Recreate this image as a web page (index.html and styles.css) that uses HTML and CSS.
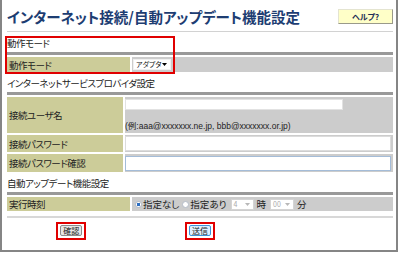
FILE: index.html
```html
<!DOCTYPE html>
<html lang="ja">
<head>
<meta charset="utf-8">
<title>インターネット接続/自動アップデート機能設定</title>
<link rel="stylesheet" href="styles.css">
</head>
<body>
<div class="frame">
  <header class="head">
    <h1 class="title">インターネット接続/自動アップデート機能設定</h1>
    <button class="help" type="button">ヘルプ?</button>
  </header>
  <div class="rule"></div>

  <section class="sec">
    <div class="sec-title">動作モード</div>
    <div class="grid grid-wide grid-mode">
      <div class="bar"></div>
      <div class="lab">動作モード</div>
      <div class="val val-pad">
        <span class="sel sel-mode">アダプタ<svg class="arr" width="5" height="3" viewBox="0 0 5 3"><path d="M0 0H5L2.5 3Z" fill="#000"/></svg></span>
      </div>
    </div>
  </section>

  <section class="sec">
    <div class="sec-title">インターネットサービスプロバイダ設定</div>
    <div class="grid grid-narrow grid-isp">
      <div class="bar"></div>
      <div class="lab">接続ユーザ名</div>
      <div class="val val-user">
        <input class="inp inp-user" type="text">
        <span class="example">(例:aaa@xxxxxxx.ne.jp, bbb@xxxxxxx.or.jp)</span>
      </div>
      <div class="lab">接続パスワード</div>
      <div class="val val-inp"><input class="inp inp-full" type="password"></div>
      <div class="lab">接続パスワード確認</div>
      <div class="val val-inp"><input class="inp inp-full inp-focus" type="password"></div>
    </div>
  </section>

  <section class="sec">
    <div class="sec-title">自動アップデート機能設定</div>
    <div class="grid grid-wide grid-time">
      <div class="bar"></div>
      <div class="lab">実行時刻</div>
      <div class="val val-time">
        <span class="radio radio-on"></span><span class="opt">指定なし</span>
        <span class="radio"></span><span class="opt">指定あり</span>
        <span class="sel sel-off sel-hour">4<svg class="arr" width="5" height="3" viewBox="0 0 5 3"><path d="M0 0H5L2.5 3Z" fill="#b8b8b8"/></svg></span>
        <span class="unit">時</span>
        <span class="sel sel-off sel-min">00<svg class="arr" width="5" height="3" viewBox="0 0 5 3"><path d="M0 0H5L2.5 3Z" fill="#b8b8b8"/></svg></span>
        <span class="unit">分</span>
      </div>
    </div>
  </section>

  <div class="rule rule-bottom"></div>

  <div class="actions">
    <div class="act-cell"><span class="mark"><button class="btn" type="button">確認</button></span></div>
    <div class="act-cell"><span class="mark"><button class="btn btn-primary" type="button">送信</button></span></div>
    <div class="act-cell"></div>
  </div>

  <div class="mark-box"></div>
</div>
</body>
</html>
```

FILE: styles.css
```css
html, body {
  margin: 0;
  padding: 0;
  background: #fff;
}

body {
  font-family: "Noto Sans CJK JP", "Noto Sans", sans-serif;
  font-feature-settings: "palt";
  color: #222;
}

.frame {
  position: relative;
  box-sizing: border-box;
  width: 398px;
  height: 252px;
  border: 2px solid #858585;
  border-top: none;
  padding: 0 3px 0 5px;
}

/* header */
.head {
  height: 31px;
  box-sizing: border-box;
  padding-top: 8px;
  display: flex;
  justify-content: space-between;
  align-items: flex-start;
}

.title {
  margin: 0;
  font-size: 14.5px;
  line-height: 17px;
  font-weight: 700;
  color: #1d3d72;
  white-space: nowrap;
}

.help {
  margin-top: 1px;
  width: 55px;
  height: 15px;
  padding: 0;
  box-sizing: border-box;
  background: #ffffc8;
  border: 1px solid;
  border-color: #e4e4d0 #9a9a8a #9a9a8a #e4e4d0;
  font-family: inherit;
  font-size: 8px;
  line-height: 13px;
  font-weight: 700;
  color: #1d2d55;
  font-feature-settings: "palt";
}

.rule {
  height: 1px;
  background: #d2d2d2;
}

.rule-bottom {
  height: 2px;
  margin-top: 5px;
  background: #d8d8d8;
}

/* sections */
.sec-title {
  box-sizing: border-box;
  height: 20px;
  padding-top: 4px;
  font-size: 9.5px;
  letter-spacing: -0.5px;
  line-height: 14px;
  color: #222;
  white-space: nowrap;
}

.grid {
  display: grid;
  gap: 2px;
}

.grid-wide {
  grid-template-columns: 123px 1fr;
}

.grid-narrow {
  grid-template-columns: 116px 1fr;
}

.grid-mode {
  grid-template-rows: 3px 15px;
}

.grid-isp {
  grid-template-rows: 3px 36px 17px 18px;
}

.grid-time {
  grid-template-rows: 3px 14px;
}

.bar {
  grid-column: 1 / -1;
  background: #999;
}

.lab {
  background: #cccc99;
  padding-left: 2px;
  font-size: 9.5px;
  letter-spacing: -0.5px;
  line-height: 12px;
  display: flex;
  align-items: center;
  white-space: nowrap;
  color: #222;
}

.val {
  background: #cccccc;
  display: flex;
  align-items: center;
  min-width: 0;
}

.val-pad {
  padding-left: 1px;
}

/* fake selects */
.sel {
  box-sizing: border-box;
  display: inline-flex;
  align-items: center;
  justify-content: space-between;
  height: 11px;
  background: #fff;
  font-size: 7px;
  line-height: 9px;
  padding: 0 3px 0 2px;
  white-space: nowrap;
}

.sel-mode {
  width: 38px;
  color: #111;
  border: 1px solid #f0f0f0;
}

.sel-off {
  border: 1px solid #d4d4d4;
  color: #aaa;
  height: 11px;
}

.sel-hour {
  width: 23px;
  margin-left: 1px;
}

.sel-min {
  width: 24px;
  margin-left: 4px;
}

.arr {
  flex: none;
}

/* inputs */
.inp {
  display: block;
  box-sizing: border-box;
  margin: 0;
  padding: 0;
  background: #fff;
  border: 1px solid #e2e2e2;
  font: inherit;
  outline: none;
}

.val-user {
  flex-direction: column;
  align-items: flex-start;
  padding-top: 2px;
}

.inp-user {
  width: 218px;
  height: 11px;
}

.example {
  margin-top: 11px;
  font-family: "Liberation Sans", "Noto Sans CJK JP", sans-serif;
  font-size: 8.5px;
  line-height: 10px;
  color: #222;
  white-space: nowrap;
}

.val-inp {
  padding-right: 2px;
}

.inp-full {
  width: 100%;
  height: 15px;
  border-color: #dcdcdc;
}

.inp-focus {
  border-color: #a4bcd8;
}

/* time row */
.val-time {
  padding-left: 3px;
  font-size: 9.5px;
  line-height: 12px;
}

.radio {
  box-sizing: border-box;
  width: 7px;
  height: 7px;
  border-radius: 50%;
  border: 1px solid #b4bcc8;
  background: #fff;
  flex: none;
}

.radio-on {
  background: radial-gradient(circle, #2f6fc0 0 1.6px, #fff 2px);
}

.opt {
  margin-left: 1px;
  margin-right: 3px;
  white-space: nowrap;
}

.unit {
  margin-left: 3px;
}

/* buttons */
.actions {
  margin-top: 4px;
  display: grid;
  grid-template-columns: repeat(3, 1fr);
}

.act-cell {
  display: flex;
  justify-content: center;
}

.mark {
  display: inline-flex;
  border: 2px solid #e00000;
  padding: 1px 2px 2px 2px;
}

.btn {
  box-sizing: border-box;
  height: 11px;
  padding: 0 2px;
  margin: 0;
  border: 1px solid #8c8c8c;
  border-radius: 2px;
  background: #e6e6e6;
  font-family: inherit;
  font-size: 8px;
  line-height: 9px;
  color: #222;
}

.btn-primary {
  border-color: #3d92d8;
  background: #dcefff;
}

/* annotation over the mode block */
.mark-box {
  position: absolute;
  left: 3px;
  top: 36px;
  width: 170px;
  height: 38px;
  box-sizing: border-box;
  border: 2px solid #e00000;
  pointer-events: none;
}
```
